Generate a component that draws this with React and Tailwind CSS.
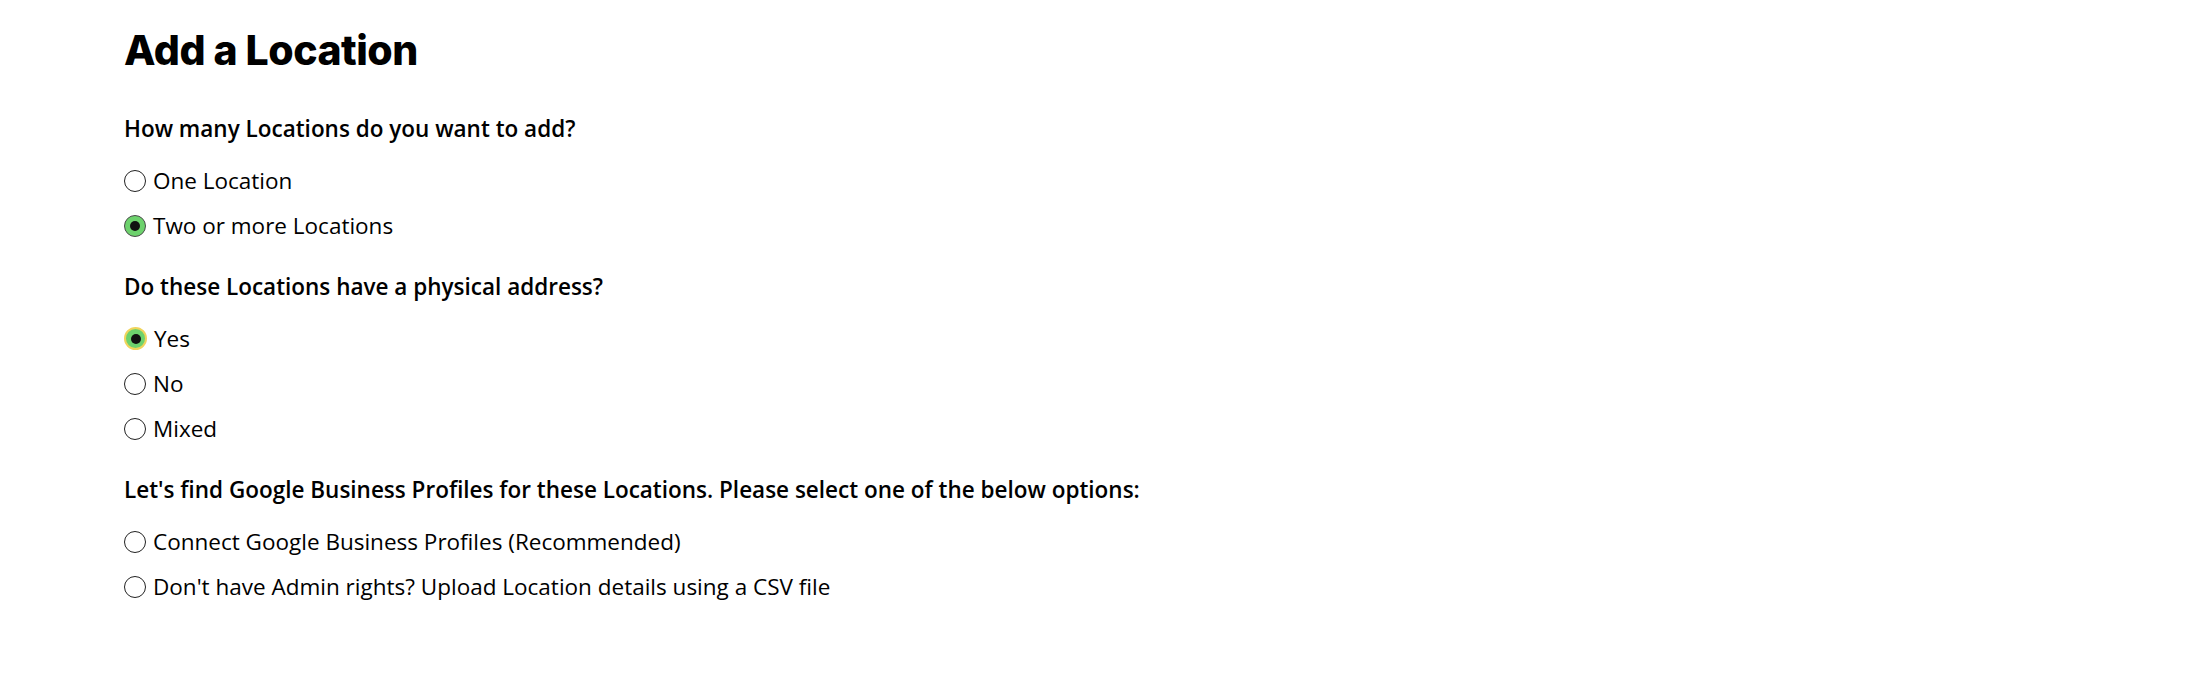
import React, { useState } from 'react';

const questions = [
  {
    id: 'count',
    label: 'How many Locations do you want to add?',
    options: ['One Location', 'Two or more Locations'],
    initial: 'Two or more Locations',
  },
  {
    id: 'address',
    label: 'Do these Locations have a physical address?',
    options: ['Yes', 'No', 'Mixed'],
    initial: 'Yes',
    focused: true,
  },
  {
    id: 'source',
    label: "Let's find Google Business Profiles for these Locations. Please select one of the below options:",
    options: [
      'Connect Google Business Profiles (Recommended)',
      "Don't have Admin rights? Upload Location details using a CSV file",
    ],
    initial: null,
  },
];

const Radio = ({ checked, focused }) => {
  if (checked && focused) {
    return (
      <span className="w-[23px] h-[23px] rounded-full border-2 border-[#f0d45c] bg-[#6dd26d] flex items-center justify-center shrink-0">
        <span className="w-[10px] h-[10px] rounded-full bg-[#111]" />
      </span>
    );
  }
  if (checked) {
    return (
      <span className="w-[22px] h-[22px] rounded-full border border-[#4a4a4a] bg-[#6dd26d] flex items-center justify-center shrink-0">
        <span className="w-[10px] h-[10px] rounded-full bg-[#111]" />
      </span>
    );
  }
  return <span className="w-[22px] h-[22px] rounded-full border border-[#222] bg-white shrink-0" />;
};

export default function App() {
  const [answers, setAnswers] = useState(() =>
    Object.fromEntries(questions.map(q => [q.id, q.initial]))
  );

  return (
    <div className="min-h-[675px] bg-white text-black pl-[124px] pt-[26px]" style={{ fontFamily: '"Open Sans", "Noto Sans", sans-serif' }}>
      <h1 className="text-[41px] leading-[49px] font-extrabold tracking-[-0.5px]" style={{ fontFamily: 'Inter, "Open Sans", sans-serif' }}>
        Add a Location
      </h1>

      <div className="mt-[39px] flex flex-col gap-[24px]">
        {questions.map(q => (
          <section key={q.id}>
            <h2 className="text-[22.5px] leading-[30px] font-semibold">{q.label}</h2>
            <div className="mt-[14px] flex flex-col">
              {q.options.map(opt => (
                <label
                  key={opt}
                  onClick={() => setAnswers(a => ({ ...a, [q.id]: opt }))}
                  className="h-[45px] flex items-center gap-[7px] cursor-pointer text-[22.5px]"
                >
                  <Radio checked={answers[q.id] === opt} focused={q.focused} />
                  <span>{opt}</span>
                </label>
              ))}
            </div>
          </section>
        ))}
      </div>
    </div>
  );
}
